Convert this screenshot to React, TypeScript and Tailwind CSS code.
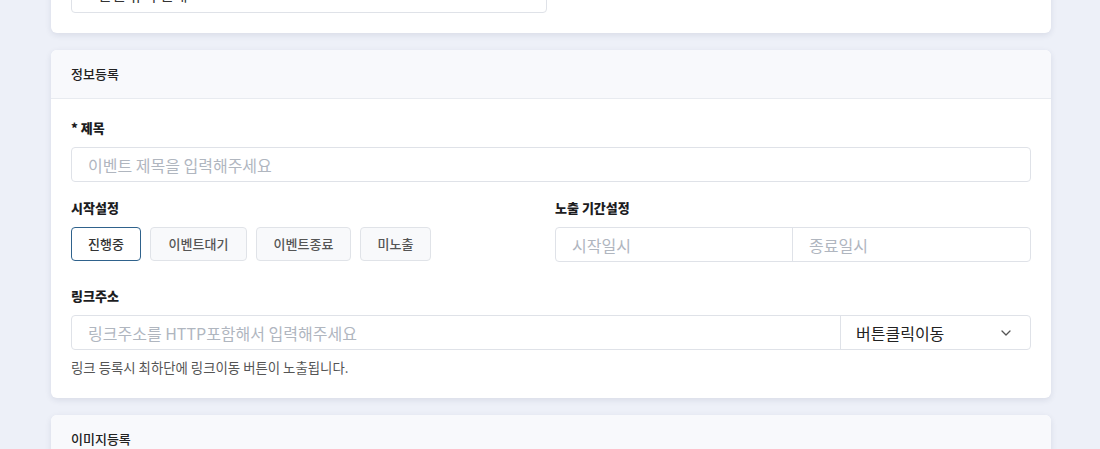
import React from "react";

const font = { fontFamily: '"Noto Sans CJK KR", "Noto Sans", sans-serif' };

function Label({ children }: { children: React.ReactNode }) {
  return <div className="text-[13px] font-extrabold leading-[19px] text-[#1d1d1f] mb-[10px]">{children}</div>;
}

export default function App() {
  const buttons = [
    { t: "진행중", c: "w-[70px] border-[#2f628c] bg-white text-[#333]" },
    { t: "이벤트대기", c: "w-[97px] border-[#e0e3e8] bg-[#f8f9fb] text-[#555]" },
    { t: "이벤트종료", c: "w-[95px] border-[#e0e3e8] bg-[#f8f9fb] text-[#555]" },
    { t: "미노출", c: "w-[71px] border-[#e0e3e8] bg-[#f8f9fb] text-[#555]" },
  ];
  return (
    <div className="h-[449px] w-[1100px] overflow-hidden bg-[#edf0f8]" style={font}>
      <div className="ml-[51px] w-[1000px] mt-[-42px] flex flex-col gap-[17px]">
        {/* card 1 (cut off) */}
        <div className="bg-white rounded-[6px] shadow-[0_2px_6px_rgba(30,40,80,0.10)] p-5">
          <div className="w-[476px] h-[35px] border border-[#dfe2e8] rounded-[4px] flex items-center pl-[26px] text-[15px] text-[#333]">
            관련 유의 안내
          </div>
        </div>

        {/* card 2 */}
        <div className="bg-white rounded-[6px] shadow-[0_2px_6px_rgba(30,40,80,0.10)] overflow-hidden">
          <div className="h-[49px] bg-[#f8f9fc] border-b border-[#e8ebf0] flex items-center px-5 text-[13px] font-medium text-[#222]">
            정보등록
          </div>
          <div className="px-5 pt-[19px] pb-[22px]">
            <Label>* 제목</Label>
            <div className="h-[35px] border border-[#dfe2e8] rounded-[4px] flex items-center pl-4 text-[16px] text-[#b0b6bf]">
              이벤트 제목을 입력해주세요
            </div>

            <div className="grid grid-cols-[484px_1fr] mt-[16px]">
              <div>
                <Label>시작설정</Label>
                <div className="flex gap-[9px]">
                  {buttons.map((b) => (
                    <div
                      key={b.t}
                      className={
                        "h-[34px] flex items-center justify-center rounded-[4px] border text-[13px] font-medium " + b.c
                      }
                    >
                      {b.t}
                    </div>
                  ))}
                </div>
              </div>
              <div>
                <Label>노출 기간설정</Label>
                <div className="h-[35px] border border-[#dfe2e8] rounded-[4px] flex text-[16px] text-[#b0b6bf]">
                  <div className="w-[237px] border-r border-[#dfe2e8] flex items-center pl-4">시작일시</div>
                  <div className="flex-1 flex items-center pl-4">종료일시</div>
                </div>
              </div>
            </div>

            <div className="mt-[24px]">
              <Label>링크주소</Label>
              <div className="h-[35px] border border-[#dfe2e8] rounded-[4px] flex text-[16px]">
                <div className="flex-1 border-r border-[#dfe2e8] flex items-center pl-4 text-[#b0b6bf]">
                  링크주소를 HTTP포함해서 입력해주세요
                </div>
                <div className="w-[189px] flex items-center justify-between pl-[15px] pr-[19px] text-[#222]">
                  <span>버튼클릭이동</span>
                  <svg width="10" height="6" viewBox="0 0 10 6" fill="none">
                    <path d="M1 1L5 5L9 1" stroke="#555" strokeWidth="1.3" strokeLinecap="round" strokeLinejoin="round" />
                  </svg>
                </div>
              </div>
              <div className="mt-[8px] text-[13.4px] leading-[18px] text-[#555]">
                링크 등록시 최하단에 링크이동 버튼이 노출됩니다.
              </div>
            </div>
          </div>
        </div>

        {/* card 3 */}
        <div className="bg-white rounded-[6px] shadow-[0_2px_6px_rgba(30,40,80,0.10)] overflow-hidden">
          <div className="h-[49px] bg-[#f8f9fc] border-b border-[#e8ebf0] flex items-center px-5 text-[13px] font-medium text-[#222]">
            이미지등록
          </div>
          <div className="h-[200px]" />
        </div>
      </div>
    </div>
  );
}
